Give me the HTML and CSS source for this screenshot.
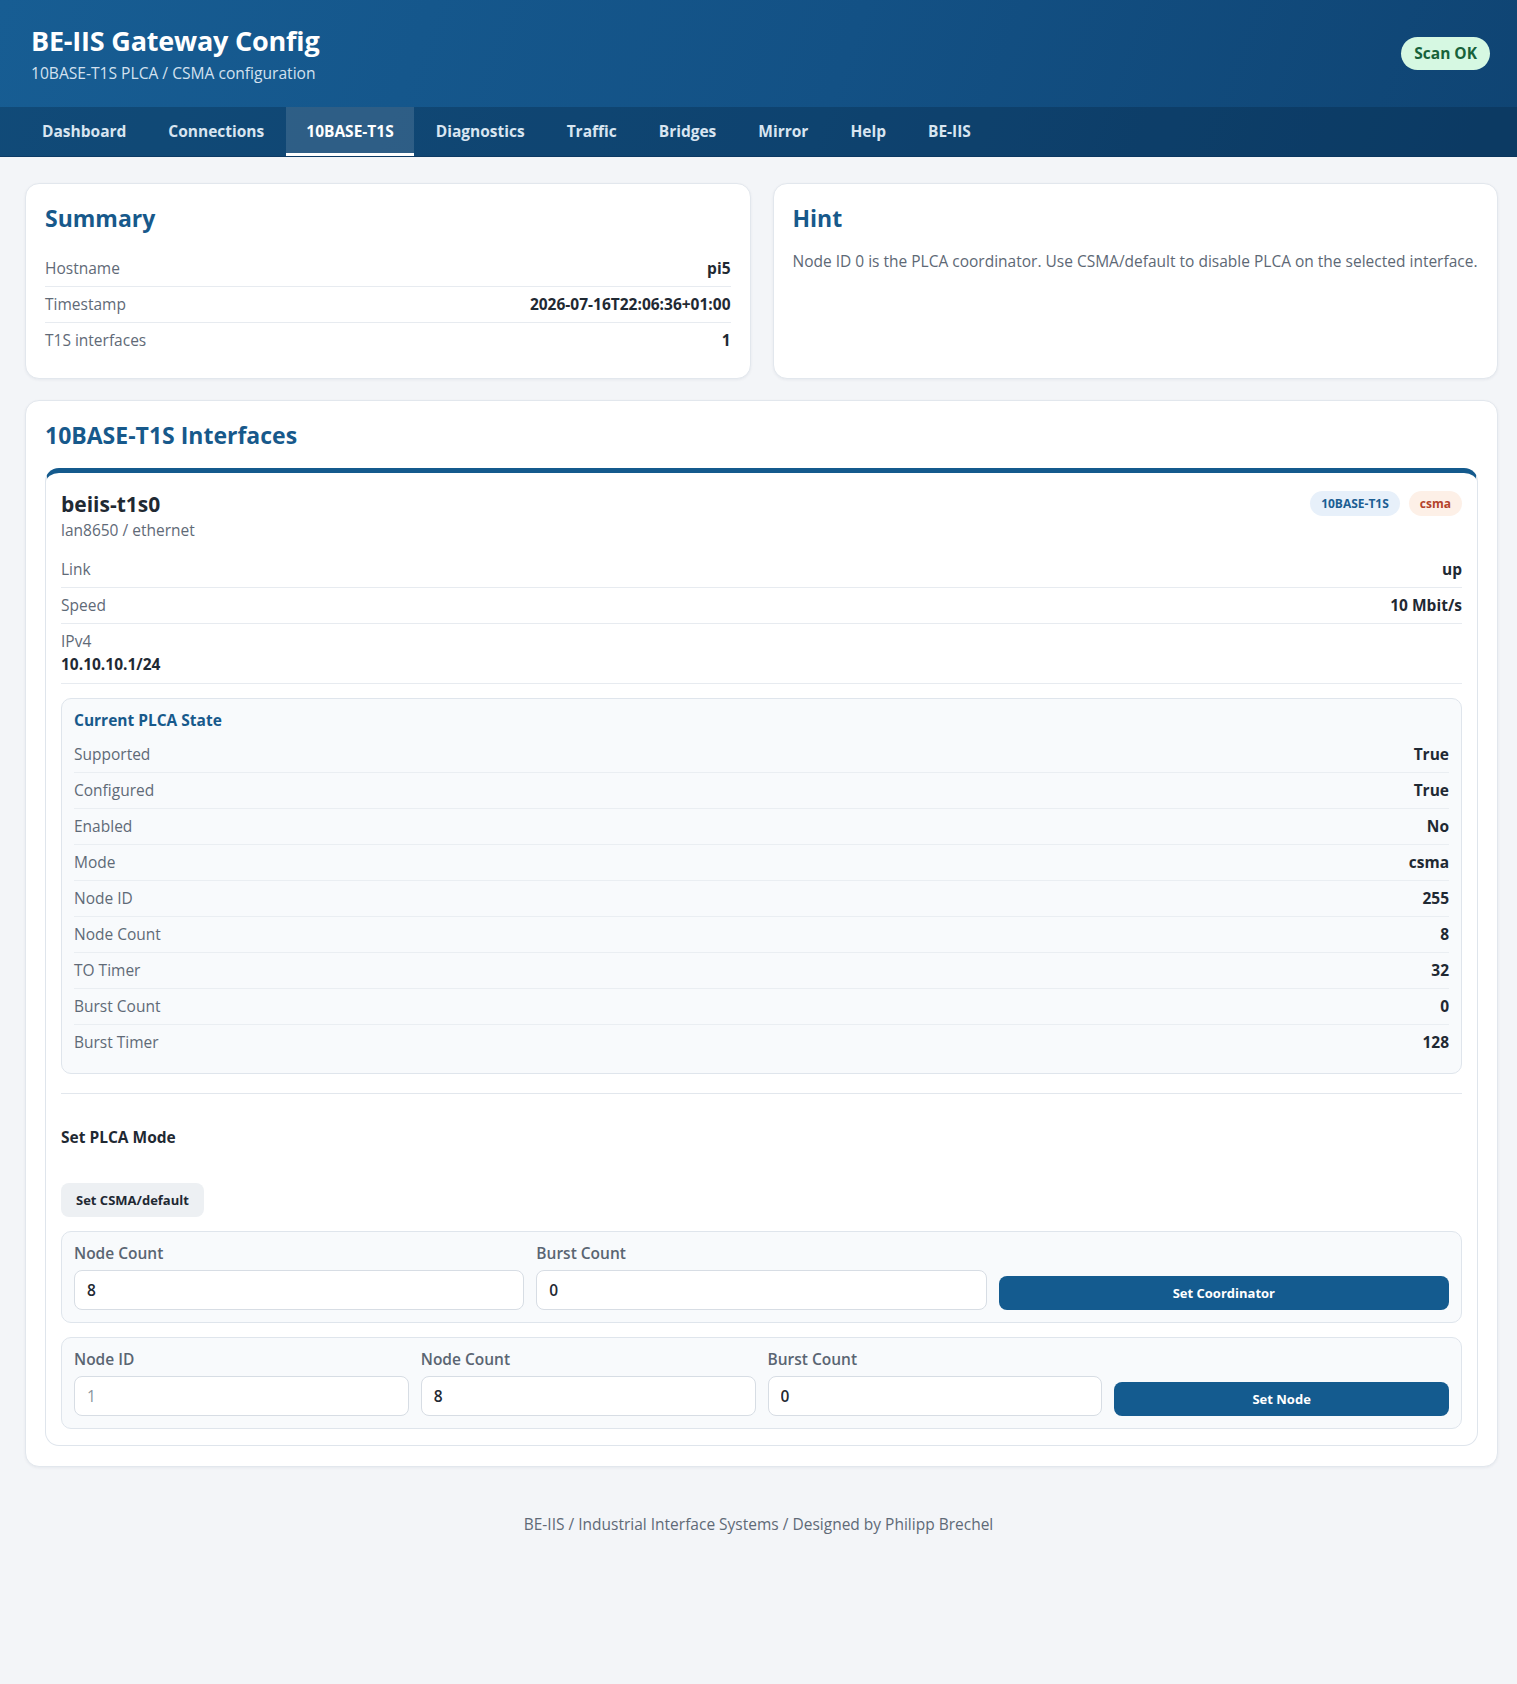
FILE: index.html
```html
<!DOCTYPE html>
<html lang="en">
<head>
<meta charset="utf-8">
<title>BE-IIS Gateway Config</title>
<link rel="stylesheet" href="styles.css">
</head>
<body>
<header class="topbar">
  <div class="brand-row">
    <div class="brand">
      <h1 class="brand-title">BE-IIS Gateway Config</h1>
      <div class="brand-sub">10BASE-T1S PLCA / CSMA configuration</div>
    </div>
    <span class="status-pill">Scan OK</span>
  </div>
  <nav class="tabs">
    <a class="tab">Dashboard</a>
    <a class="tab">Connections</a>
    <a class="tab active">10BASE-T1S</a>
    <a class="tab">Diagnostics</a>
    <a class="tab">Traffic</a>
    <a class="tab">Bridges</a>
    <a class="tab">Mirror</a>
    <a class="tab">Help</a>
    <a class="tab">BE-IIS</a>
  </nav>
</header>

<main class="page">
  <div class="grid-two">
    <section class="card">
      <h2 class="card-title">Summary</h2>
      <div class="kv">
        <div class="kv-row"><span class="kv-label">Hostname</span><span class="kv-value">pi5</span></div>
        <div class="kv-row"><span class="kv-label">Timestamp</span><span class="kv-value">2026-07-16T22:06:36+01:00</span></div>
        <div class="kv-row"><span class="kv-label">T1S interfaces</span><span class="kv-value">1</span></div>
      </div>
    </section>
    <section class="card">
      <h2 class="card-title">Hint</h2>
      <p class="hint-text">Node ID 0 is the PLCA coordinator. Use CSMA/default to disable PLCA on the selected interface.</p>
    </section>
  </div>

  <section class="card">
    <h2 class="card-title">10BASE-T1S Interfaces</h2>
    <div class="iface">
      <div class="iface-head">
        <div>
          <div class="iface-name">beiis-t1s0</div>
          <div class="iface-sub">lan8650 / ethernet</div>
        </div>
        <div class="badges">
          <span class="badge badge-blue">10BASE-T1S</span>
          <span class="badge badge-orange">csma</span>
        </div>
      </div>
      <div class="kv">
        <div class="kv-row"><span class="kv-label">Link</span><span class="kv-value">up</span></div>
        <div class="kv-row"><span class="kv-label">Speed</span><span class="kv-value">10 Mbit/s</span></div>
        <div class="kv-row kv-stack"><span class="kv-label">IPv4</span><span class="kv-value">10.10.10.1/24</span></div>
      </div>

      <div class="plca-box">
        <div class="plca-title">Current PLCA State</div>
        <div class="kv">
          <div class="kv-row"><span class="kv-label">Supported</span><span class="kv-value">True</span></div>
          <div class="kv-row"><span class="kv-label">Configured</span><span class="kv-value">True</span></div>
          <div class="kv-row"><span class="kv-label">Enabled</span><span class="kv-value">No</span></div>
          <div class="kv-row"><span class="kv-label">Mode</span><span class="kv-value">csma</span></div>
          <div class="kv-row"><span class="kv-label">Node ID</span><span class="kv-value">255</span></div>
          <div class="kv-row"><span class="kv-label">Node Count</span><span class="kv-value">8</span></div>
          <div class="kv-row"><span class="kv-label">TO Timer</span><span class="kv-value">32</span></div>
          <div class="kv-row"><span class="kv-label">Burst Count</span><span class="kv-value">0</span></div>
          <div class="kv-row"><span class="kv-label">Burst Timer</span><span class="kv-value">128</span></div>
        </div>
      </div>

      <div class="mode-section">
        <h3 class="mode-title">Set PLCA Mode</h3>
        <button class="btn-soft" type="button">Set CSMA/default</button>
        <form class="form-box cols-3">
          <label class="field"><span class="field-label">Node Count</span><input class="input" value="8"></label>
          <label class="field"><span class="field-label">Burst Count</span><input class="input" value="0"></label>
          <button class="btn-primary" type="button">Set Coordinator</button>
        </form>
        <form class="form-box cols-4">
          <label class="field"><span class="field-label">Node ID</span><input class="input" placeholder="1"></label>
          <label class="field"><span class="field-label">Node Count</span><input class="input" value="8"></label>
          <label class="field"><span class="field-label">Burst Count</span><input class="input" value="0"></label>
          <button class="btn-primary" type="button">Set Node</button>
        </form>
      </div>
    </div>
  </section>
</main>

<footer class="footer">BE-IIS / Industrial Interface Systems / Designed by Philipp Brechel</footer>
</body>
</html>
```

FILE: styles.css
```css
* { box-sizing: border-box; }

html, body {
  margin: 0;
  padding: 0;
}

body {
  background: #f3f5f8;
  color: #1f2933;
  font-family: "Open Sans", "Noto Sans", "DejaVu Sans", sans-serif;
  font-size: 15.5px;
  line-height: 1.25;
}

/* Header */
.topbar {
  background: linear-gradient(110deg, #175d93 0%, #135185 55%, #0f4473 100%);
  color: #fff;
}

.brand-row {
  display: flex;
  align-items: center;
  justify-content: space-between;
  padding: 24px 27px 24px 31px;
}

.brand-title {
  margin: 0;
  font-size: 27px;
  line-height: 34px;
  font-weight: 700;
  letter-spacing: -0.2px;
}

.brand-sub {
  font-size: 15.6px;
  line-height: 20px;
  color: #d3e1ef;
  margin-top: 5px;
}

.status-pill {
  background: #d6f8e2;
  color: #17623a;
  font-weight: 700;
  font-size: 15.5px;
  line-height: 19px;
  padding: 7px 13px;
  border-radius: 999px;
}

.tabs {
  display: flex;
  height: 50px;
  padding: 0 22px;
  gap: 2px;
  background: rgba(6, 36, 66, 0.32);
  border-bottom: 1px solid rgba(10, 50, 90, 0.6);
}

.tab {
  display: flex;
  align-items: center;
  padding: 3px 20px 0;
  border-bottom: 3px solid transparent;
  color: #d8e5f1;
  font-weight: 700;
  font-size: 15.5px;
  text-decoration: none;
}

.tab.active {
  color: #fff;
  background: rgba(255, 255, 255, 0.13);
  border-bottom-color: #fff;
}

/* Page */
.page {
  display: flex;
  flex-direction: column;
  gap: 21px;
  padding: 26px 19px 0 25px;
}

.grid-two {
  display: grid;
  grid-template-columns: 1fr 1fr;
  gap: 22px;
}

.card {
  background: #fff;
  border: 1px solid #e2e7ed;
  border-radius: 14px;
  padding: 19px 19px 20px;
  box-shadow: 0 1px 3px rgba(20, 40, 70, 0.06);
}

.card-title {
  margin: 0 0 18px;
  font-size: 23px;
  line-height: 30px;
  font-weight: 700;
  color: #17598b;
}

.hint-text {
  margin: 0;
  color: #5d6875;
  font-size: 15.5px;
  line-height: 20px;
}

/* Key/value rows */
.kv-row {
  display: flex;
  justify-content: space-between;
  align-items: center;
  padding: 8px 0;
  line-height: 19px;
  border-bottom: 1px solid #e7ebf0;
}

.kv > .kv-row:last-child { border-bottom: none; }

.kv-label {
  color: #5f6a77;
}

.kv-value {
  font-weight: 700;
  color: #1f2933;
}

.kv-stack {
  flex-direction: column;
  align-items: flex-start;
  padding-bottom: 9px;
}

.kv-stack .kv-value { margin-top: 4px; }

.iface .kv > .kv-stack:last-child { border-bottom: 1px solid #e7ebf0; }

/* Interface card */
.iface {
  border: 1px solid #dfe5ec;
  border-top: 5px solid #145a8d;
  border-radius: 14px;
  padding: 17px 15px 16px;
}

.iface-head {
  display: flex;
  justify-content: space-between;
  align-items: flex-start;
  margin-bottom: 12px;
}

.iface-name {
  font-size: 21px;
  line-height: 28px;
  font-weight: 700;
  color: #1f2933;
}

.iface-sub {
  color: #5f6a77;
  line-height: 20px;
  margin-top: 2px;
}

.badges {
  display: flex;
  gap: 9px;
  margin-top: 1px;
}

.badge {
  font-size: 12px;
  font-weight: 700;
  line-height: 15px;
  padding: 5px 11px;
  border-radius: 999px;
}

.badge-blue { background: #e7f0fa; color: #1b5e93; }
.badge-orange { background: #fdf0e7; color: #b4422a; }

.plca-box {
  margin-top: 14px;
  background: #f8fafc;
  border: 1px solid #dfe5ec;
  border-radius: 10px;
  padding: 11px 12px 13px;
}

.plca-title {
  font-weight: 700;
  line-height: 20px;
  color: #17598b;
  margin-bottom: 7px;
}

.plca-box .kv-row { border-bottom-color: #eaeef2; }

/* Mode section */
.mode-section {
  margin-top: 19px;
  border-top: 1px solid #e2e7ed;
  padding-top: 33px;
  display: flex;
  flex-direction: column;
  align-items: flex-start;
}

.mode-title {
  margin: 0 0 36px;
  font-size: 15.5px;
  line-height: 20px;
  font-weight: 700;
  color: #1f2933;
}

.btn-soft {
  font-family: inherit;
  font-size: 13px;
  font-weight: 700;
  color: #1f2933;
  background: #edf0f3;
  border: none;
  border-radius: 8px;
  height: 34px;
  padding: 0 15px;
  margin-bottom: 14px;
}

.form-box {
  align-self: stretch;
  display: grid;
  gap: 12px;
  align-items: end;
  margin: 0 0 14px;
  background: #f8fafc;
  border: 1px solid #dfe5ec;
  border-radius: 10px;
  padding: 12px;
}

.form-box:last-child { margin-bottom: 0; }

.cols-3 { grid-template-columns: repeat(3, 1fr); }
.cols-4 { grid-template-columns: repeat(4, 1fr); }

.field {
  display: flex;
  flex-direction: column;
  gap: 8px;
}

.field-label {
  font-size: 15.5px;
  line-height: 18px;
  font-weight: 600;
  color: #5a6572;
}

.input {
  font-family: inherit;
  font-size: 15.5px;
  font-weight: 600;
  color: #1f2933;
  height: 40px;
  padding: 0 12px;
  border: 1px solid #d7dde4;
  border-radius: 8px;
  background: #fff;
  width: 100%;
}

.input::placeholder { color: #8a939d; font-weight: 400; }

.btn-primary {
  font-family: inherit;
  font-size: 13px;
  font-weight: 700;
  color: #fff;
  background: #145b8f;
  border: none;
  border-radius: 8px;
  height: 34px;
}

/* Footer */
.footer {
  text-align: center;
  color: #5f6a77;
  font-size: 15.5px;
  padding: 48px 0 60px;
}
```
